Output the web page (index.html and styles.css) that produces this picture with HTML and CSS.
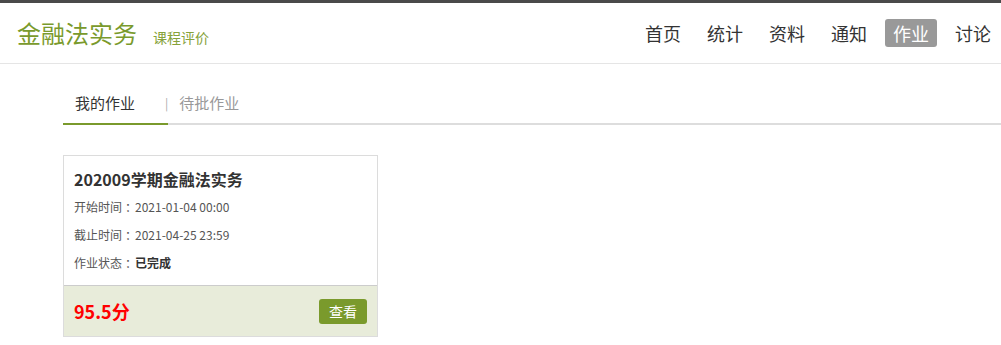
FILE: index.html
```html
<!DOCTYPE html>
<html lang="zh-CN">
<head>
<meta charset="utf-8">
<title>金融法实务 - 作业</title>
<link rel="stylesheet" href="styles.css">
</head>
<body>
<header class="header">
  <div class="brand">
    <span class="brand-title">金融法实务</span>
    <span class="brand-sub">课程评价</span>
  </div>
  <nav class="nav">
    <a class="nav-item">首页</a>
    <a class="nav-item">统计</a>
    <a class="nav-item">资料</a>
    <a class="nav-item">通知</a>
    <a class="nav-item active">作业</a>
    <a class="nav-item">讨论</a>
  </nav>
</header>
<main class="main">
  <div class="tabs">
    <span class="tab active">我的作业</span>
    <span class="tab-sep">|</span>
    <span class="tab">待批作业</span>
  </div>
  <div class="cards">
    <div class="card">
      <div class="card-body">
        <div class="card-title">202009学期金融法实务</div>
        <div class="card-line">开始时间<span class="colon">：</span>2021-01-04 00:00</div>
        <div class="card-line">截止时间<span class="colon">：</span>2021-04-25 23:59</div>
        <div class="card-line">作业状态<span class="colon">：</span><b>已完成</b></div>
      </div>
      <div class="card-foot">
        <span class="score">95.5分</span>
        <a class="btn">查看</a>
      </div>
    </div>
  </div>
</main>
</body>
</html>
```
FILE: styles.css
```css
* { box-sizing: border-box; }
body {
  margin: 0;
  background: #fff;
  font-family: "Noto Sans CJK SC", "Microsoft YaHei", sans-serif;
  color: #333;
  border-top: 3px solid #4a4a4a;
}
.header {
  height: 61px;
  border-bottom: 1px solid #e5e5e5;
  display: flex;
  align-items: center;
  justify-content: space-between;
  padding: 0 2px 0 17px;
}
.brand {
  display: flex;
  align-items: baseline;
  gap: 16px;
  margin-top: -1px;
}
.brand-title {
  font-size: 24px;
  color: #7a9a2c;
  line-height: 30px;
}
.brand-sub {
  font-size: 14px;
  color: #86a23a;
}
.nav {
  display: flex;
  gap: 10px;
}
.nav-item {
  font-size: 18px;
  line-height: 28px;
  padding: 0 8px;
  color: #333;
  border-radius: 3px;
}
.nav-item.active {
  background: #999;
  color: #fff;
}
.main {
  padding-left: 63px;
}
.tabs {
  margin-top: 18px;
  display: flex;
  align-items: center;
  border-bottom: 2px solid #ddd;
}
.tab {
  font-size: 15px;
  line-height: 41px;
  color: #999;
}
.tab.active {
  color: #333;
  padding: 0 33px 0 12px;
  border-bottom: 2px solid #7a9a2c;
  margin-bottom: -2px;
}
.tab-sep {
  font-size: 12px;
  color: #aaa;
  margin-left: -3px;
  margin-right: 11px;
}
.cards {
  padding-top: 30px;
}
.card {
  width: 315px;
  border: 1px solid #dcdcdc;
}
.card-body {
  padding: 9px 10px 8px;
}
.card-title {
  font-size: 16px;
  font-weight: bold;
  line-height: 28px;
  color: #333;
}
.card-line {
  font-size: 12px;
  line-height: 28px;
  color: #555;
}
.colon {
  margin-left: 3px;
  margin-right: -2px;
}
.card-line b {
  color: #333;
}
.card-foot {
  height: 51px;
  border-top: 1px solid #ccc;
  background: #e8ecda;
  display: flex;
  align-items: center;
  justify-content: space-between;
  padding: 0 10px;
}
.score {
  font-size: 18px;
  font-weight: bold;
  color: #f00;
}
.btn {
  width: 48px;
  height: 25px;
  line-height: 25px;
  text-align: center;
  background: #7a9a2c;
  color: #fff;
  font-size: 14px;
  border-radius: 3px;
}
```
